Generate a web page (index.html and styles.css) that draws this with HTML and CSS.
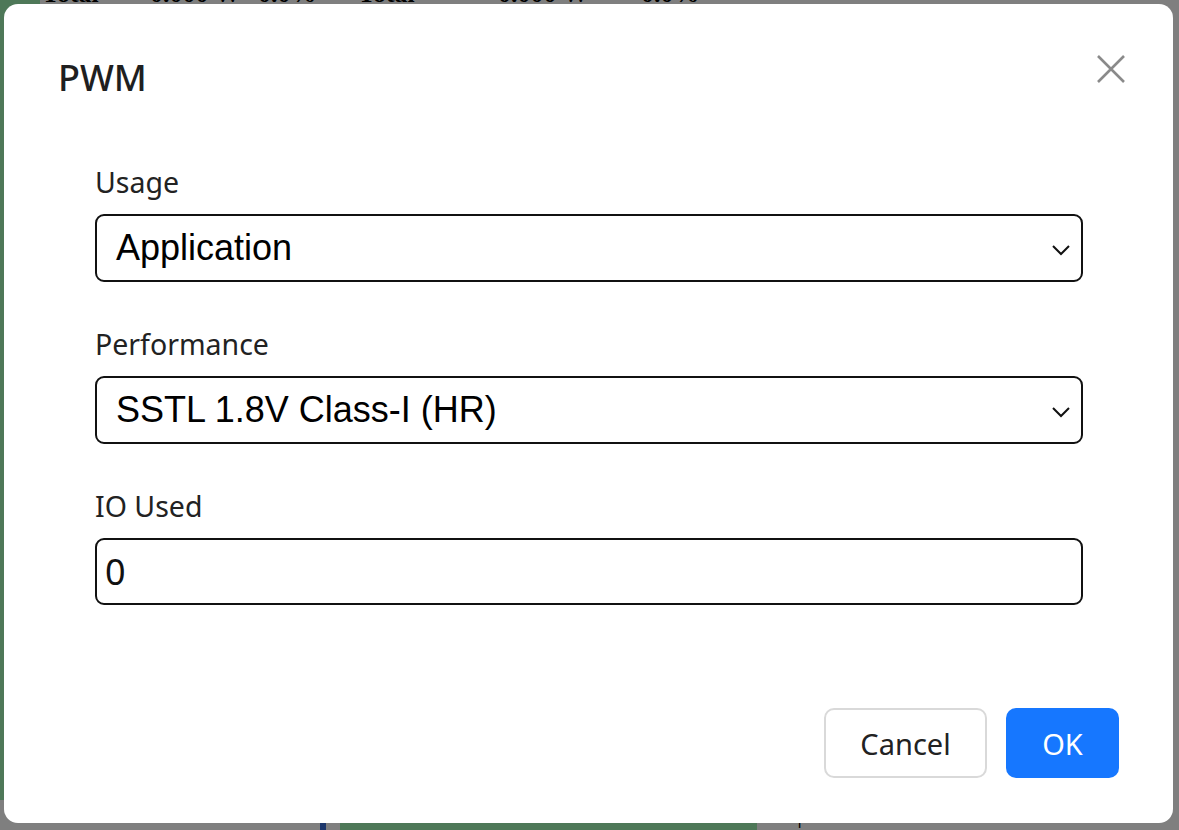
FILE: index.html
```html
<!DOCTYPE html>
<html>
<head>
<meta charset="utf-8">
<link rel="stylesheet" href="styles.css">
</head>
<body>
<div class="page">
  <div class="row top">
    <div class="cell side"></div>
    <div class="cell c1"><b>Total</b></div>
    <div class="cell c2"><b>0.000 W</b></div>
    <div class="cell c3"><b>0.0%</b></div>
    <div class="cell c4"><b>Total</b></div>
    <div class="cell c5"><b>0.000 W</b></div>
    <div class="cell c6"><b>0.0%</b></div>
  </div>
  <div class="filler"></div>
  <div class="row bottom">
    <div class="cell side"></div>
    <div class="cell gap"></div>
    <div class="cell bar"></div>
    <div class="cell green">0.0 k</div>
    <div class="cell green">0.000 W</div>
    <div class="cell green">0 %</div>
    <div class="cell plain">| &nbsp;0.0%</div>
  </div>
</div>
<div class="mask"></div>
<div class="modal">
  <div class="modal-header">
    <div class="modal-title">PWM</div>
    <button class="close" aria-label="Close">
      <svg width="30" height="30" viewBox="0 0 30 30"><path d="M2 2 L28 28 M28 2 L2 28" stroke="#8a8a8a" stroke-width="2.6" fill="none"/></svg>
    </button>
  </div>
  <div class="modal-body">
    <div class="field">
      <label class="label">Usage</label>
      <div class="select">
        <span class="select-value">Application</span>
        <svg class="chev" width="20" height="12" viewBox="0 0 20 12"><path d="M2 2 L10 10 L18 2" stroke="#111" stroke-width="2" fill="none"/></svg>
      </div>
    </div>
    <div class="field">
      <label class="label">Performance</label>
      <div class="select">
        <span class="select-value">SSTL 1.8V Class-I (HR)</span>
        <svg class="chev" width="20" height="12" viewBox="0 0 20 12"><path d="M2 2 L10 10 L18 2" stroke="#111" stroke-width="2" fill="none"/></svg>
      </div>
    </div>
    <div class="field">
      <label class="label">IO Used</label>
      <div class="input">0</div>
    </div>
  </div>
  <div class="modal-footer">
    <button class="btn btn-default">Cancel</button>
    <button class="btn btn-primary">OK</button>
  </div>
</div>
</body>
</html>
```

FILE: styles.css
```css
html, body {
  margin: 0;
  padding: 0;
}
body {
  width: 1179px;
  height: 830px;
  overflow: hidden;
  background: #ffffff;
  font-family: "Liberation Serif", serif;
}
.page {
  display: flex;
  flex-direction: column;
  height: 830px;
}
.row {
  display: flex;
  font-size: 26px;
}
.top {
  height: 24px;
  margin-top: -18px;
  line-height: 24px;
}
.cell {
  overflow: hidden;
  white-space: nowrap;
}
.side {
  width: 40px;
  background: #9cf0b0;
}
.c1 { width: 108px; padding-left: 2px; }
.c2 { width: 108px; }
.c3 { width: 100px; }
.c4 { width: 140px; }
.c5 { width: 143px; }
.c6 { width: 80px; }
.filler {
  flex: 1;
  background: linear-gradient(to right, #9cf0b0 0 12px, #ffffff 12px);
}
.bottom {
  height: 30px;
  line-height: 30px;
}
.bottom .side { width: 0; }
.gap { width: 320px; }
.bar { width: 6px; background: #3a6fd8; margin-right: 14px; }
.green { background: #9cf0b0; width: 119px; padding-left: 20px; }
.plain { padding-left: 40px; }

.mask {
  position: fixed;
  inset: 0;
  background: rgba(0, 0, 0, 0.5);
}
.modal {
  position: fixed;
  left: 4px;
  top: 4px;
  width: 1169px;
  height: 819px;
  background: #ffffff;
  border-radius: 14px;
  box-sizing: border-box;
  padding: 49px 54px 45px 54px;
  display: flex;
  flex-direction: column;
  font-family: "Noto Sans", "Open Sans", sans-serif;
  color: rgba(0, 0, 0, 0.88);
}
.modal-header {
  display: flex;
  justify-content: space-between;
  align-items: flex-start;
}
.modal-title {
  font-size: 36px;
  line-height: 50px;
  font-weight: 500;
  color: #1f1f1f;
}
.close {
  border: 0;
  background: none;
  padding: 0;
  margin-top: 1px;
  margin-right: -7px;
  width: 30px;
  height: 30px;
  display: flex;
}
.modal-body {
  padding: 59px 36px 0 37px;
  display: flex;
  flex-direction: column;
  gap: 42px;
  flex: 1;
}
.field {
  display: flex;
  flex-direction: column;
}
.label {
  font-size: 28.5px;
  line-height: 40px;
  color: #222;
  margin-bottom: 12px;
}
.select, .input {
  flex: none;
  height: 68px;
  box-sizing: border-box;
  border: 2px solid #111;
  border-radius: 9px;
  display: flex;
  align-items: center;
}
.select {
  padding: 0 10px 0 19px;
  justify-content: space-between;
  font-family: "Liberation Sans", Arial, sans-serif;
  font-size: 36px;
  color: #000;
}
.chev {
  margin-top: 4px;
}
.input {
  height: 67px;
  padding-left: 8px;
  font-size: 36px;
  color: #111;
}
.modal-footer {
  display: flex;
  justify-content: flex-end;
  gap: 19px;
}
.btn {
  height: 70px;
  border-radius: 10px;
  font-family: "Noto Sans", "Open Sans", sans-serif;
  font-size: 29px;
  padding: 0;
  cursor: pointer;
}
.btn-default {
  width: 163px;
  background: #ffffff;
  border: 2px solid #d9d9d9;
  color: #222;
}
.btn-primary {
  width: 113px;
  background: #1677ff;
  border: 0;
  color: #ffffff;
}
```
